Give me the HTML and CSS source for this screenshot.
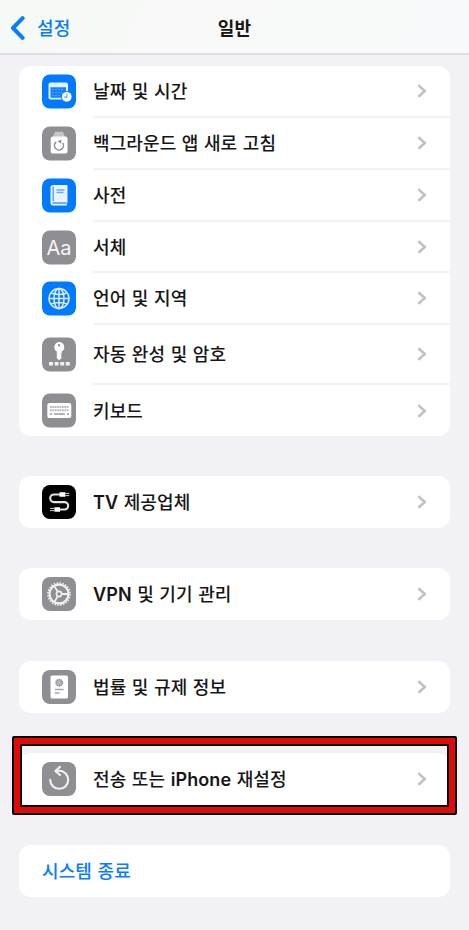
FILE: index.html
```html
<!DOCTYPE html>
<html lang="ko">
<head>
<meta charset="utf-8">
<title>일반</title>
<link rel="stylesheet" href="styles.css">
</head>
<body>
<svg class="defs" width="0" height="0"><symbol id="chev" viewBox="0 0 10 16"><path d="M1.4 2.2 7.8 8 1.4 13.8" fill="none" stroke="currentColor" stroke-width="2.6"/></symbol></svg>
<header class="nav">
  <div class="back">
    <svg width="15" height="24" viewBox="0 0 15 24"><path d="M12.6 2.2 3 12l9.6 9.8" fill="none" stroke="currentColor" stroke-width="4" stroke-linecap="round" stroke-linejoin="round"/></svg>
    <span>설정</span>
  </div>
  <h1>일반</h1>
</header>
<main>
  <section class="card">
    <div class="row"><div class="icon blue"><svg viewBox="0 0 34 34"><rect x="6.5" y="8" width="19.5" height="17" rx="2" fill="#e4f1ff"/><path d="M8.5 12.8h15.5v10.4H8.5z" fill="#1482ff"/><path d="M10 15h12M10 18h10M10 21h8" stroke="#4b9fff" stroke-width="1.2" stroke-dasharray="2 1"/><circle cx="24.7" cy="22.3" r="5.8" fill="#007aff"/><circle cx="24.7" cy="22.3" r="4.9" fill="#fff"/><path d="M24.9 19.3v3.3h-2.6" fill="none" stroke="#4b9fff" stroke-width="1.1"/></svg></div><div class="label"><span>날짜 및 시간</span><svg class="chev"><use href="#chev"/></svg></div></div>
    <div class="row"><div class="icon"><svg viewBox="0 0 34 34"><path d="M13 5.2h8l2 5.3H11z" fill="#c4c4c7"/><rect x="8.7" y="10" width="16.8" height="17" rx="2" fill="#fff"/><path d="M14.2 15.4a4.5 4.5 0 1 0 6.5 1" fill="none" stroke="#8e8e93" stroke-width="1.5"/><path d="m15.5 14.5 4-1.3-.5 4z" fill="#8e8e93"/></svg></div><div class="label"><span>백그라운드 앱 새로 고침</span><svg class="chev"><use href="#chev"/></svg></div></div>
    <div class="row"><div class="icon blue"><svg viewBox="0 0 34 34"><path d="M11 6.5h13.5q1 0 1 1v17q-2 .5 0 2.5H11q-2.5 0-2.5-2.5V9q0-2.5 2.5-2.5z" fill="#e9f4ff"/><path d="M11.2 8v14.5M10.5 24.5h14" stroke="#439bff" stroke-width="1.3"/><path d="M14.5 11.4h8M14.5 14h7" stroke="#65adff" stroke-width="1.5"/></svg></div><div class="label"><span>사전</span><svg class="chev"><use href="#chev"/></svg></div></div>
    <div class="row short"><div class="icon aa">Aa</div><div class="label"><span>서체</span><svg class="chev"><use href="#chev"/></svg></div></div>
    <div class="row"><div class="icon blue"><svg viewBox="0 0 34 34"><g fill="none" stroke="#dcecff" stroke-width="1.5"><circle cx="17" cy="17" r="10"/><ellipse cx="17" cy="17" rx="5" ry="10"/><path d="M17 7v20M7 17h20M9 11.5q8 3 16 0M9 22.5q8-3 16 0"/></g></svg></div><div class="label"><span>언어 및 지역</span><svg class="chev"><use href="#chev"/></svg></div></div>
    <div class="row tall"><div class="icon"><svg viewBox="0 0 34 34"><path fill-rule="evenodd" d="M17 4.5a5.2 5.2 0 0 1 2.8 9.6v1.4l-1 1.3 1 1.2-1 1.2.9 1.2-2.7 2.3-2.2-2v-6.6A5.2 5.2 0 0 1 17 4.5zm0 2a1.2 1.2 0 1 0 .01 0z" fill="#fff"/><path d="M7 26.3h21" stroke="#f1f1f2" stroke-width="3.6" stroke-dasharray="4 1.6"/></svg></div><div class="label"><span>자동 완성 및 암호</span><svg class="chev"><use href="#chev"/></svg></div></div>
    <div class="row short last"><div class="icon raised"><svg viewBox="0 0 34 34"><rect x="5.3" y="9.6" width="24" height="15" rx="2.2" fill="#fff"/><path d="M8 13.5h19M8 16.8h19" stroke="#b5b5b9" stroke-width="2.1" stroke-dasharray="1.7 .7"/><path d="M8 20.5h2.2M12 20.5h11M25 20.5h2" stroke="#b5b5b9" stroke-width="2"/></svg></div><div class="label"><span>키보드</span><svg class="chev"><use href="#chev"/></svg></div></div>
  </section>
  <section class="card single">
    <div class="row last"><div class="icon black"><svg viewBox="0 0 34 34"><path d="M18 9.5h-6a3.8 3.8 0 0 0 0 7.6h10.5a3.7 3.7 0 0 1 0 7.4H18" fill="none" stroke="#e4e4e4" stroke-width="2.1"/><path d="M17.5 7.3h5.7v4.4h-5.7zM12.5 22.3H18v4.4h-5.5z" fill="#fff"/><path d="M23 8.4h4.2M23 10.6h4.2M8 23.4h5M8 25.6h5" stroke="#ccc"/></svg></div><div class="label"><span><span class="latin">TV</span> 제공업체</span><svg class="chev"><use href="#chev"/></svg></div></div>
  </section>
  <section class="card single">
    <div class="row last"><div class="icon"><svg viewBox="0 0 34 34"><g fill="none" stroke="#f0f0f1"><circle cx="17" cy="17" r="11" stroke-width="1.7" stroke-dasharray="1.6 1.28"/><circle cx="17" cy="17" r="9.4" stroke-width="2.1"/><circle cx="17" cy="17" r="2.6" stroke-width="1.6"/><path d="M20 17h7M15.5 14.4 12 8.4M15.5 19.6 12 25.6" stroke-width="1.8"/></g></svg></div><div class="label"><span><span class="latin">VPN</span> 및 기기 관리</span><svg class="chev"><use href="#chev"/></svg></div></div>
  </section>
  <section class="card single">
    <div class="row last"><div class="icon"><svg viewBox="0 0 34 34"><rect x="8.5" y="5.5" width="17.5" height="23" rx="1.5" fill="#fff"/><circle cx="17.2" cy="12.7" r="3.2" fill="#b4b4b8" stroke="#8e8e93" stroke-width="1.5" stroke-dasharray="1.4 .6"/><path d="M13 19.5h8.6M13 23h4.5" stroke="#a6a6aa" stroke-width="1.4"/></svg></div><div class="label"><span>법률 및 규제 정보</span><svg class="chev"><use href="#chev"/></svg></div></div>
  </section>
  <section class="card single target">
    <div class="row last"><div class="icon"><svg viewBox="0 0 34 34"><path d="M8.2 17.8a9 9 0 1 0 9-9h-2" fill="none" stroke="#f2f2f3" stroke-width="2.1" stroke-linecap="round"/><path d="m18 4.8-4.6 4.2 4.6 4" fill="none" stroke="#f2f2f3" stroke-width="2.1" stroke-linecap="round" stroke-linejoin="round"/></svg></div><div class="label"><span>전송 또는 <span class="latin">iPhone</span> 재설정</span><svg class="chev"><use href="#chev"/></svg></div></div>
    <div class="highlight"></div>
  </section>
  <section class="card single">
    <div class="row last action"><span>시스템 종료</span></div>
  </section>
</main>
</body>
</html>
```
FILE: styles.css
```css
* { box-sizing: border-box; }
body {
  margin: 0;
  height: 930px;
  overflow: hidden;
  background: #f2f1f6;
  color: #161616;
  font: 500 18px/26px Inter, "Noto Sans CJK KR", sans-serif;
  letter-spacing: 0.1px;
  word-spacing: 0.6px;
}
.defs { position: absolute; }
.nav {
  height: 55px;
  display: grid;
  grid-template-columns: 1fr auto 1fr;
  align-items: center;
  padding: 3px 0 0 10px;
  border-bottom: 2px solid #dedde3;
  background: linear-gradient(115deg, #f5faf5 0, #f8f9f8 35%, #f8f9fa);
}
.nav h1 {
  margin: 0 10px 0 0;
  padding-top: 1px;
  font-size: 18px;
  line-height: 26px;
  font-weight: 700;
}
.back { display: flex; align-items: center; gap: 12px; color: #067cff; }
.back span { padding-top: 1px; }
main {
  padding: 11px 19px 0;
  display: flex;
  flex-direction: column;
  gap: 40.2px;
}
.card { background: #fff; border-radius: 12px; }
.row {
  height: 52px;
  display: flex;
  padding-left: 23px;
}
.short { height: 51px; }
.tall { height: 60px; }
.icon {
  width: 34px;
  height: 34px;
  margin: auto 17px auto 0;
  border-radius: 8px;
  background: #8e8e93;
  flex: none;
}
.row:not(.last) .icon { transform: translateY(-0.5px); }
.last .raised { transform: translateY(-0.5px); }
.icon svg { display: block; width: 34px; height: 34px; }
.blue { background: #007aff; }
.black { background: #000; }
.aa {
  color: #f4f4f5;
  font-size: 20px;
  font-weight: 400;
  line-height: 34px;
  text-align: center;
}
.label {
  flex: 1;
  display: flex;
  align-items: center;
  justify-content: space-between;
  padding-right: 23px;
  border-bottom: 2px solid #f2f2f3;
}
.label > span, .action > span { padding-top: 2px; }
.latin { font-weight: 600; }
.last .label { border-bottom: 0; }
.chev { width: 10px; height: 16px; color: #c2c2c4; }
.target { position: relative; }
.highlight {
  position: absolute;
  left: -7px;
  top: -17px;
  width: 445px;
  height: 79px;
  border: 2px solid #000;
  border-radius: 2px;
  box-shadow: inset 0 0 0 6px #e10a08, inset 0 0 0 8px #000;
}
.action { align-items: center; color: #067cff; }
```
